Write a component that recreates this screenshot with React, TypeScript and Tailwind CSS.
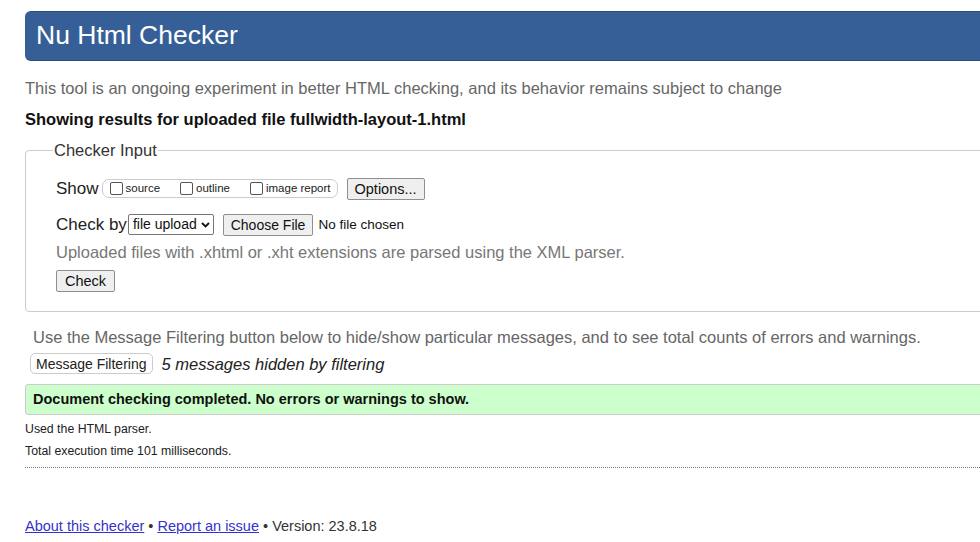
import React from 'react';

// Nu Html Checker results page. Content is wider than the window, so it runs off the right edge.

const sans = { fontFamily: '"Liberation Sans", Arial, sans-serif' };

function Btn({ children, className = '' }: { children: React.ReactNode; className?: string }) {
  return (
    <button
      type="button"
      className={`border border-[#8f8f8f] bg-[#efefef] rounded-[2px] text-[#111] leading-none ${className}`}
    >
      {children}
    </button>
  );
}

function Box({ label }: { label: string }) {
  return (
    <label className="flex items-center gap-[3px] text-[11.5px] text-[#222]">
      <span className="inline-block w-[13px] h-[13px] border border-[#555] rounded-[2px] bg-white" />
      {label}
    </label>
  );
}

export default function App() {
  return (
    <div className="w-[980px] h-[542px] overflow-hidden bg-white" style={sans}>
      <div className="w-[1100px] pl-[25px] pt-[11px]">
        <header className="h-[50px] bg-[#375f97] border-y border-[#2c4c7c] rounded-[6px] flex items-center pl-[11px]">
          <h1 className="text-[26.5px] text-white leading-none -mt-[1px]">Nu Html Checker</h1>
        </header>

        <p className="mt-[17px] text-[16.5px] text-[#666] leading-[20px]">
          This tool is an ongoing experiment in better HTML checking, and its behavior remains subject to change
        </p>
        <p className="mt-[11px] text-[16.5px] font-bold text-[#111] leading-[20px]">
          Showing results for uploaded file fullwidth-layout-1.html
        </p>

        <fieldset className="mt-[9px] border border-[#ccc] rounded-[4px] pl-[30px] pb-[18px]">
          <legend className="-ml-[3px] px-[1px] text-[16.5px] text-[#333]">Checker Input</legend>

          <div className="mt-[15px] flex items-center h-[22px]">
            <span className="text-[17px] text-[#222]">Show</span>
            <div className="ml-[3px] flex items-center gap-[20px] h-[19px] border border-[#ccc] rounded-[7px] pl-[7px] pr-[6px]">
              <Box label="source" />
              <Box label="outline" />
              <Box label="image report" />
            </div>
            <Btn className="ml-[9px] h-[22px] px-[7px] text-[14.5px]">Options...</Btn>
          </div>

          <div className="mt-[14px] flex items-center h-[22px]">
            <span className="text-[17px] text-[#222]">Check by</span>
            <span className="ml-[1px] flex items-center gap-[4px] h-[21px] border border-[#767676] rounded-[2px] pl-[4px] pr-[3px] text-[14px] text-[#111]">
              file upload
              <svg width="9" height="6" viewBox="0 0 9 6">
                <path d="M1 1l3.5 3.5L8 1" stroke="#111" strokeWidth="1.8" fill="none" />
              </svg>
            </span>
            <Btn className="ml-[9px] h-[22px] px-[7px] text-[14px]">Choose File</Btn>
            <span className="ml-[5px] text-[13.5px] text-[#111]">No file chosen</span>
          </div>

          <p className="mt-[6px] text-[16.5px] text-[#777] leading-[20px]">
            Uploaded files with .xhtml or .xht extensions are parsed using the XML parser.
          </p>

          <Btn className="mt-[8px] h-[22px] px-[8px] text-[14.5px]">Check</Btn>
        </fieldset>

        <p className="mt-[15px] ml-[8px] text-[16.5px] text-[#666] leading-[20px]">
          Use the Message Filtering button below to hide/show particular messages, and to see total counts of errors and warnings.
        </p>
        <div className="mt-[5px] ml-[5px] flex items-center">
          <button
            type="button"
            className="h-[21px] px-[5px] border border-[#ccc] rounded-[5px] bg-white text-[14px] text-[#222] leading-none"
          >
            Message Filtering
          </button>
          <span className="ml-[9px] text-[16.5px] italic text-[#222]">5 messages hidden by filtering</span>
        </div>

        <div className="mt-[8px] h-[31px] bg-[#ccffcc] border border-[#ccc] rounded-l-[3px] flex items-center pl-[7px]">
          <span className="text-[14.5px] font-bold text-[#111]">Document checking completed. No errors or warnings to show.</span>
        </div>

        <p className="mt-[6px] text-[12.3px] text-[#222] leading-[16px]">Used the HTML parser.</p>
        <p className="mt-[6px] text-[12.3px] text-[#222] leading-[16px]">Total execution time 101 milliseconds.</p>

        <div className="mt-[8px] border-t border-dotted border-[#777]" />

        <footer className="mt-[48px] text-[14.5px] text-[#333]">
          <a href="#" className="text-[#3333cc] underline">About this checker</a>
          {' • '}
          <a href="#" className="text-[#3333cc] underline">Report an issue</a>
          {' • Version: 23.8.18'}
        </footer>
      </div>
    </div>
  );
}
